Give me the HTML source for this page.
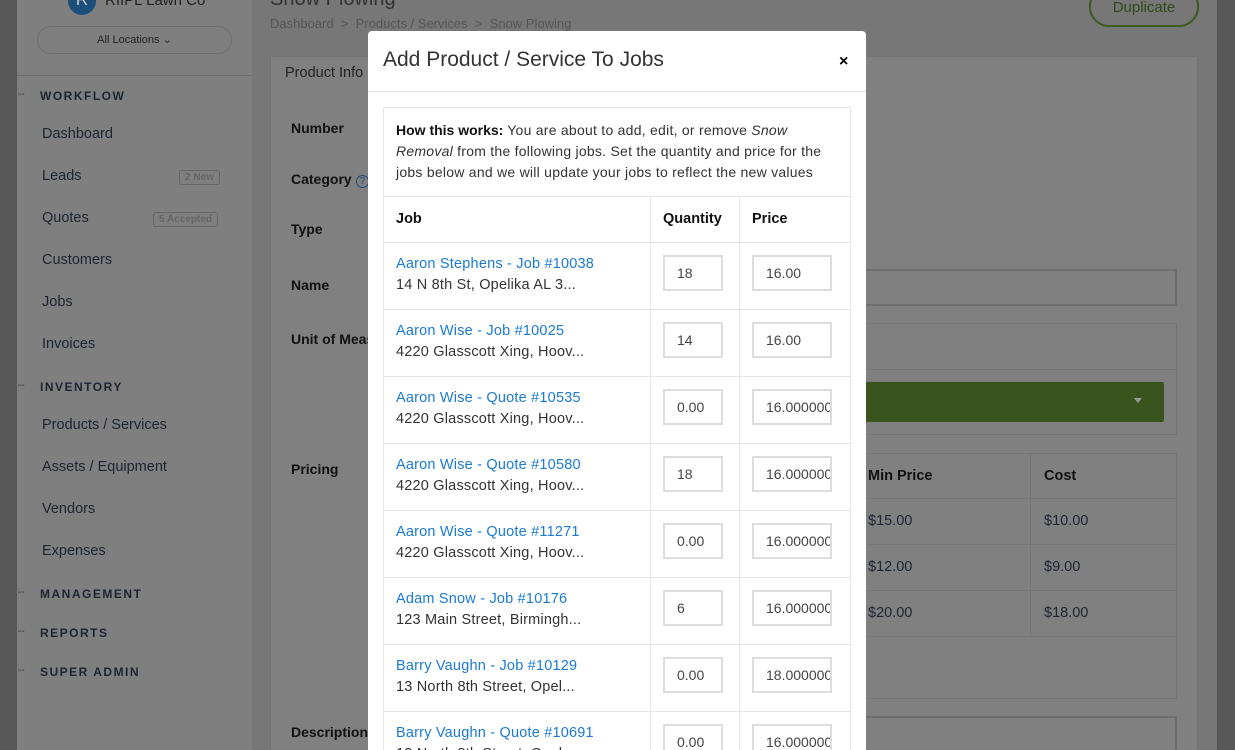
<!DOCTYPE html>
<html style="overflow:hidden;background:#777"><head><meta charset="utf-8"><style>
*{box-sizing:border-box;margin:0;padding:0}
html,body{width:1235px;height:750px;overflow:hidden}
body{position:relative;background:#777;font-family:"Liberation Sans",sans-serif;color:#222}
.a{position:absolute}
.side{left:17px;top:0;width:235px;height:750px;background:#7f7f7f}
.main{left:252px;top:0;width:965px;height:750px;background:#777}
.rs{left:1217px;top:0;width:18px;height:750px;background:#575757}
.ls{left:0;top:0;width:17px;height:750px;background:#575757}
.sec{font-size:12px;letter-spacing:1.5px;font-weight:bold;color:#1e2430}
.dash{font-size:10px;color:#333}
.nav{font-size:14.5px;color:#1e2430}
.badge{border:1px solid #666;border-radius:3px;font-size:10px;color:#666;padding:1px 5px;font-weight:bold}
.lbl{font-size:14px;font-weight:bold;color:#111}
.card{left:270px;top:56px;width:928px;height:694px;background:#808080;border:1px solid #747474;border-bottom:none}
.modal{left:368px;top:31px;width:498px;height:719px;background:#fff;border-radius:4px 4px 0 0;overflow:hidden}
.ib{left:15px;top:76px;width:468px;height:643px;border:1px solid #e5e5e5;border-bottom:none;overflow:hidden}
.row{position:absolute;left:0;width:466px;border-top:1px solid #e5e5e5}
.c1{position:absolute;left:266px;top:0;bottom:0;border-left:1px solid #e5e5e5}
.c2{position:absolute;left:355px;top:0;bottom:0;border-left:1px solid #e5e5e5}
.in{position:absolute;height:36px;border:2px solid #ddd;font-size:14px;color:#444;padding:8px 0 0 12px;overflow:hidden;white-space:nowrap}
.lk{position:absolute;left:12px;font-size:14.5px;color:#1a7ad4;letter-spacing:0.2px}
.ad{position:absolute;left:12px;font-size:14.5px;color:#333;letter-spacing:0.2px}
</style></head><body>
<div class="a ls"></div><div class="a side"></div><div class="a main"></div><div class="a rs"></div>
<div class="a" style="left:68px;top:-13px;width:28px;height:28px;border-radius:50%;background:#1b4f7a;color:#ccc;font-size:17px;text-align:center;line-height:26px">R</div>
<div class="a" style="left:105px;top:-8px;font-size:15px;color:#222">RIIPL Lawn Co</div>
<div class="a" style="left:37px;top:26px;width:195px;height:28px;border:1px solid #6f6f6f;border-radius:14px;font-size:11px;text-align:center;line-height:27px;color:#222">All Locations &#8964;</div>
<div class="a" style="left:17px;top:75px;width:235px;border-top:1px solid #6e6e6e"></div>
<div class="a dash" style="left:18px;top:89px">--</div><div class="a sec" style="left:40px;top:89px">WORKFLOW</div>
<div class="a nav" style="left:42px;top:126px">Dashboard</div>
<div class="a nav" style="left:42px;top:168px">Leads</div><div class="a badge" style="left:179px;top:170px">2 New</div>
<div class="a nav" style="left:42px;top:210px">Quotes</div><div class="a badge" style="left:153px;top:212px">5 Accepted</div>
<div class="a nav" style="left:42px;top:252px">Customers</div>
<div class="a nav" style="left:42px;top:294px">Jobs</div>
<div class="a nav" style="left:42px;top:336px">Invoices</div>
<div class="a dash" style="left:18px;top:380px">--</div><div class="a sec" style="left:40px;top:380px">INVENTORY</div>
<div class="a nav" style="left:42px;top:417px">Products / Services</div>
<div class="a nav" style="left:42px;top:459px">Assets / Equipment</div>
<div class="a nav" style="left:42px;top:501px">Vendors</div>
<div class="a nav" style="left:42px;top:543px">Expenses</div>
<div class="a dash" style="left:18px;top:587px">--</div><div class="a sec" style="left:40px;top:587px">MANAGEMENT</div>
<div class="a dash" style="left:18px;top:626px">--</div><div class="a sec" style="left:40px;top:626px">REPORTS</div>
<div class="a dash" style="left:18px;top:665px">--</div><div class="a sec" style="left:40px;top:665px">SUPER ADMIN</div>

<div class="a" style="left:270px;top:-12px;font-size:20px;color:#333">Snow Plowing</div>
<div class="a" style="left:270px;top:16px;font-size:13px;color:#555">Dashboard &nbsp;&gt;&nbsp; Products / Services &nbsp;&gt;&nbsp; Snow Plowing</div>
<div class="a" style="left:1089px;top:-14px;width:110px;height:41px;border:2px solid #3a5a1e;border-radius:20px;font-size:15px;color:#2f4a1a;text-align:center;line-height:40px">Duplicate</div>
<div class="a card"></div>
<div class="a" style="left:271px;top:57px;width:100px;height:35px;background:#808080;border-right:1px solid #747474"></div>
<div class="a" style="left:285px;top:65px;font-size:14.5px;color:#222">Product Info</div>
<div class="a lbl" style="left:291px;top:120px">Number</div>
<div class="a lbl" style="left:291px;top:171px">Category <span style="font-weight:normal;border:1px solid #1a4a7a;border-radius:50%;font-size:10px;padding:0 3px;color:#1a4a7a">?</span></div>
<div class="a lbl" style="left:291px;top:221px">Type</div>
<div class="a lbl" style="left:291px;top:277px">Name</div>
<div class="a lbl" style="left:291px;top:331px">Unit of Measure</div>
<div class="a lbl" style="left:291px;top:461px">Pricing</div>
<div class="a lbl" style="left:291px;top:724px">Description</div>
<div class="a" style="left:850px;top:269px;width:327px;height:37px;border:2px solid #6e6e6e"></div>
<div class="a" style="left:850px;top:323px;width:327px;height:112px;border:1px solid #767676"></div>
<div class="a" style="left:850px;top:369px;width:327px;border-top:1px solid #767676"></div>
<div class="a" style="left:850px;top:382px;width:314px;height:40px;background:#3a541e;border-radius:2px"></div>
<div class="a" style="left:1134px;top:398px;border:4px solid transparent;border-top:5px solid #999"></div>
<div class="a" style="left:850px;top:453px;width:327px;height:246px;border:1px solid #767676"></div>
<div class="a" style="left:850px;top:498px;width:327px;border-top:1px solid #767676"></div>
<div class="a" style="left:850px;top:544px;width:327px;border-top:1px solid #767676"></div>
<div class="a" style="left:850px;top:590px;width:327px;border-top:1px solid #767676"></div>
<div class="a" style="left:850px;top:636px;width:327px;border-top:1px solid #767676"></div>
<div class="a" style="left:1030px;top:453px;height:183px;border-left:1px solid #767676"></div>
<div class="a lbl" style="left:868px;top:468px;font-size:14.5px">Min Price</div><div class="a lbl" style="left:1044px;top:468px;font-size:14.5px">Cost</div>
<div class="a nav" style="left:868px;top:513px">$15.00</div><div class="a nav" style="left:1044px;top:513px">$10.00</div>
<div class="a nav" style="left:868px;top:559px">$12.00</div><div class="a nav" style="left:1044px;top:559px">$9.00</div>
<div class="a nav" style="left:868px;top:605px">$20.00</div><div class="a nav" style="left:1044px;top:605px">$18.00</div>
<div class="a" style="left:850px;top:716px;width:327px;height:34px;border:2px solid #6e6e6e;border-bottom:none"></div>

<div class="a modal">
<div class="a" style="left:15px;top:17px;font-size:21px;color:#333">Add Product / Service To Jobs</div>
<div class="a" style="left:471px;top:22px;font-size:16px;font-weight:bold;color:#000">×</div>
<div class="a" style="left:0;top:60px;width:498px;border-top:1px solid #e5e5e5"></div>
<div class="a ib">
<div class="a" style="left:12px;top:12px;width:448px;font-size:14px;line-height:21px;color:#333;letter-spacing:0.25px"><b style="color:#111;letter-spacing:0">How this works:</b> You are about to add, edit, or remove <i>Snow Removal</i> from the following jobs. Set the quantity and price for the jobs below and we will update your jobs to reflect the new values</div>
<div class="row" style="top:88px;height:46px"><div class="c1"></div><div class="c2"></div>
<div class="a lbl" style="left:12px;top:14px;font-size:14.5px;font-weight:bold">Job</div><div class="a lbl" style="left:279px;top:14px;font-size:14.5px">Quantity</div><div class="a lbl" style="left:368px;top:14px;font-size:14.5px">Price</div></div>
<div class="row" style="top:134px;height:67px"><div class="c1"></div><div class="c2"></div><div class="lk" style="top:13px">Aaron Stephens - Job #10038</div><div class="ad" style="top:34px">14 N 8th St, Opelika AL 3...</div><div class="in" style="left:279px;top:12px;width:60px">18</div><div class="in" style="left:368px;top:12px;width:80px">16.00</div></div>
<div class="row" style="top:201px;height:67px"><div class="c1"></div><div class="c2"></div><div class="lk" style="top:13px">Aaron Wise - Job #10025</div><div class="ad" style="top:34px">4220 Glasscott Xing, Hoov...</div><div class="in" style="left:279px;top:12px;width:60px">14</div><div class="in" style="left:368px;top:12px;width:80px">16.00</div></div>
<div class="row" style="top:268px;height:67px"><div class="c1"></div><div class="c2"></div><div class="lk" style="top:13px">Aaron Wise - Quote #10535</div><div class="ad" style="top:34px">4220 Glasscott Xing, Hoov...</div><div class="in" style="left:279px;top:12px;width:60px">0.00</div><div class="in" style="left:368px;top:12px;width:80px">16.000000</div></div>
<div class="row" style="top:335px;height:67px"><div class="c1"></div><div class="c2"></div><div class="lk" style="top:13px">Aaron Wise - Quote #10580</div><div class="ad" style="top:34px">4220 Glasscott Xing, Hoov...</div><div class="in" style="left:279px;top:12px;width:60px">18</div><div class="in" style="left:368px;top:12px;width:80px">16.000000</div></div>
<div class="row" style="top:402px;height:67px"><div class="c1"></div><div class="c2"></div><div class="lk" style="top:13px">Aaron Wise - Quote #11271</div><div class="ad" style="top:34px">4220 Glasscott Xing, Hoov...</div><div class="in" style="left:279px;top:12px;width:60px">0.00</div><div class="in" style="left:368px;top:12px;width:80px">16.000000</div></div>
<div class="row" style="top:469px;height:67px"><div class="c1"></div><div class="c2"></div><div class="lk" style="top:13px">Adam Snow - Job #10176</div><div class="ad" style="top:34px">123 Main Street, Birmingh...</div><div class="in" style="left:279px;top:12px;width:60px">6</div><div class="in" style="left:368px;top:12px;width:80px">16.000000</div></div>
<div class="row" style="top:536px;height:67px"><div class="c1"></div><div class="c2"></div><div class="lk" style="top:13px">Barry Vaughn - Job #10129</div><div class="ad" style="top:34px">13 North 8th Street, Opel...</div><div class="in" style="left:279px;top:12px;width:60px">0.00</div><div class="in" style="left:368px;top:12px;width:80px">18.000000</div></div>
<div class="row" style="top:603px;height:40px"><div class="c1"></div><div class="c2"></div><div class="lk" style="top:13px">Barry Vaughn - Quote #10691</div><div class="ad" style="top:34px">13 North 8th Street, Opel...</div><div class="in" style="left:279px;top:12px;width:60px">0.00</div><div class="in" style="left:368px;top:12px;width:80px">16.000000</div></div>
</div>
</div>
</body></html>
